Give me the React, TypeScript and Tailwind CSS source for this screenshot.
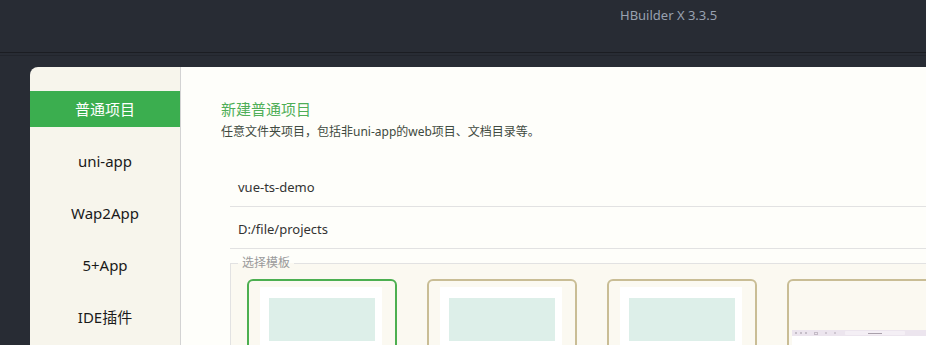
import React from "react";

const sans = { fontFamily: '"Noto Sans", "Noto Sans CJK SC", sans-serif' };

function Card({ active, browser }: { active?: boolean; browser?: boolean }) {
  return (
    <div
      className={`w-[150px] h-[90px] shrink-0 rounded-[6px] border-2 ${
        active ? "border-[#4caf50]" : "border-[#c9bd95]"
      } bg-[#fbf9f1] ${browser ? "pt-[49px] pl-[3px]" : "pt-[6px] pl-[11px]"}`}
    >
      {browser ? (
        <div className="w-full">
          <div className="h-[6px] bg-[#ece5ee] flex items-center gap-[3px] pl-[3px]">
            <span className="w-[2px] h-[2px] rounded-full bg-[#b9b0bb]" />
            <span className="w-[2px] h-[2px] rounded-full bg-[#b9b0bb]" />
            <span className="w-[2px] h-[2px] rounded-full bg-[#b9b0bb]" />
            <span className="w-[4px] h-[3px] ml-[4px] border border-[#c4bbc6]" />
            <span className="w-[2px] h-[2px] ml-[4px] bg-[#cfc7d1]" />
            <span className="w-[2px] h-[2px] ml-[4px] bg-[#cfc7d1]" />
            <span className="w-[60px] h-[4px] ml-[6px] rounded-[1px] bg-[#f4eff5] flex items-center justify-center">
              <span className="w-[14px] h-px bg-[#a9a0ab]" />
            </span>
          </div>
          <div className="h-[20px] bg-white" />
        </div>
      ) : (
        <div className="w-[122px] h-[80px] bg-white pt-[11px] pl-[9px]">
          <div className="w-[106px] h-[43px] bg-[#ddefe9]" />
        </div>
      )}
    </div>
  );
}

export default function App() {
  const items = ["普通项目", "uni-app", "Wap2App", "5+App", "IDE插件"];
  return (
    <div className="w-[926px] h-[345px] bg-[#282c34] overflow-hidden flex flex-col" style={sans}>
      <div className="h-[52px] shrink-0 pl-[620px] pt-[2px]">
        <span className="text-[13px] leading-[18px] text-[#98a1b0]">HBuilder X 3.3.5</span>
      </div>
      <div className="h-px shrink-0 bg-[#1b1d22]" />
      <div className="h-[2px] shrink-0" />
      <div className="h-px shrink-0 bg-[#22252c]" />
      <div className="flex-1 pl-[30px] pt-[11px] min-h-0">
        <div className="flex h-full rounded-tl-[8px] overflow-hidden">
          <div className="w-[151px] shrink-0 bg-[#f7f5ec] border-r border-[#d3d3d3] pt-[24px] flex flex-col gap-[16px]">
            {items.map((t, i) => (
              <div
                key={t}
                className={`h-[36px] flex items-center justify-center text-[15px] ${
                  i === 0 ? "bg-[#3bae4f] text-white" : "text-[#1a1a1a]"
                }`}
              >
                {t}
              </div>
            ))}
          </div>
          <div className="flex-1 bg-[#fefefa] pl-[40px] pt-[31px]">
            <div className="text-[15px] leading-[22px] text-[#4fae57]">新建普通项目</div>
            <div className="text-[12px] leading-[18px] text-[#3f4a40] mt-[3px]">
              任意文件夹项目，包括非uni-app的web项目、文档目录等。
            </div>
            <div className="ml-[9px] mt-[24px]">
              <div className="h-[42px] border-b border-[#e2e2e2] flex items-center pl-[8px] text-[13px] text-[#333] pt-[5px]">
                vue-ts-demo
              </div>
              <div className="h-[42px] border-b border-[#e2e2e2] flex items-center pl-[8px] text-[13px] text-[#333] pt-[5px]">
                D:/file/projects
              </div>
              <fieldset className="mt-[6px] border-t border-l border-[#e2e2e2] bg-[#fbf9f1] pl-[16px] pt-[8px] pb-[20px]">
                <legend className="-ml-[9px] px-[4px] text-[12px] leading-[16px] text-[#9a9a9a]">选择模板</legend>
                <div className="flex gap-[30px]">
                  <Card active />
                  <Card />
                  <Card />
                  <Card browser />
                </div>
              </fieldset>
            </div>
          </div>
        </div>
      </div>
    </div>
  );
}
